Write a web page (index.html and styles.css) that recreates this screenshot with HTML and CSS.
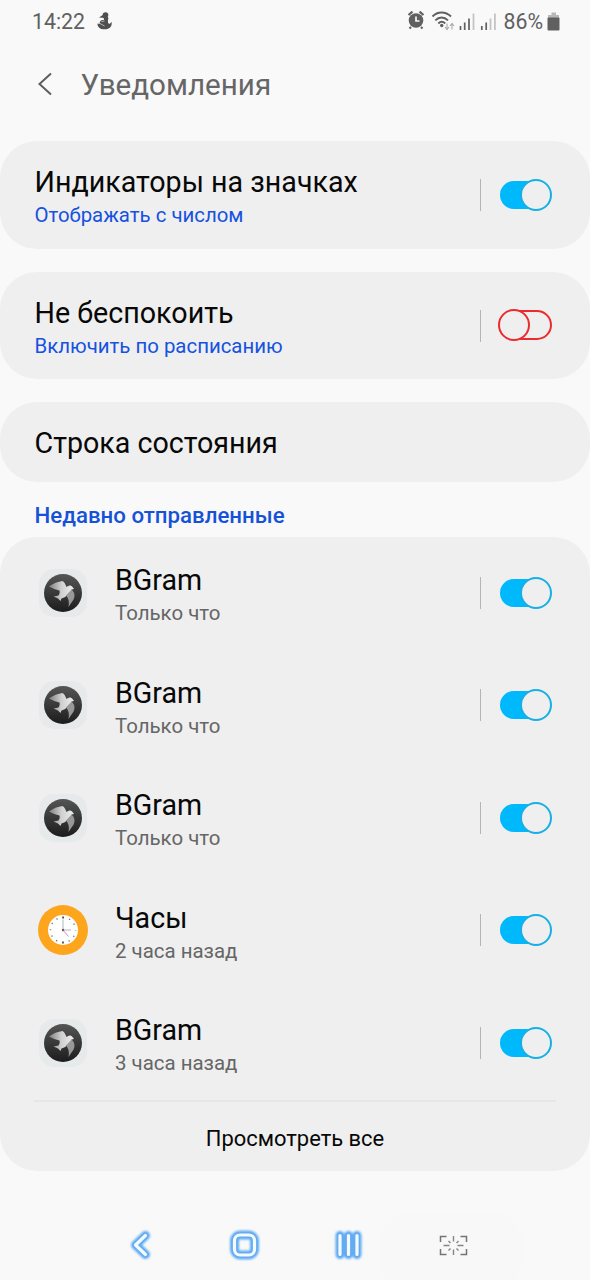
FILE: index.html
```html
<!DOCTYPE html>
<html lang="ru">
<head>
<meta charset="utf-8">
<title>Уведомления</title>
<link rel="stylesheet" href="styles.css">
</head>
<body>
<svg class="defs" width="0" height="0" aria-hidden="true">
  <defs>
    <linearGradient id="disc" x1="0" y1="0" x2="0" y2="1"><stop offset="0" stop-color="#555"/><stop offset="1" stop-color="#1c1c1c"/></linearGradient>
    <linearGradient id="wing" x1="0" y1="0" x2="1" y2="0"><stop offset="0" stop-color="#808080"/><stop offset=".5" stop-color="#d0d0d0"/><stop offset="1" stop-color="#eee"/></linearGradient>
    <symbol id="bgram" viewBox="0 0 50 50">
      <rect x="1" y="1" width="48" height="48" rx="15" fill="#e6eaea"/>
      <circle cx="25" cy="25" r="19" fill="url(#disc)"/>
      <path d="M11 18.500C15 15.500 20 13.500 24.500 13C26.500 14 27.500 16.500 28.500 19C30.500 17 33 17 34.500 19L36 21L33.500 21.500C33 24 31 26 29 27C27.500 29.500 25 30 23.500 30.500L22.500 33L20 30.500L15.500 28.500L20.500 27.500C21.500 26 22 24.500 21.500 22.500C18 21.500 14.500 20.500 11 18.500Z" fill="url(#wing)"/>
      <path d="M33.500 21.500C38 25 37 31 33.500 34.500L30.500 39C31.500 34 30.500 30 28 27.500Z" fill="#989898"/>
    </symbol>
  </defs>
</svg>
<div class="screen">
  <header class="status">
    <span class="time">14:22</span>
    <svg class="snake" width="16" height="18" viewBox="0 0 16 18"><circle cx="8.500" cy="3" r="2.800"/><path d="M8 1.500L2 5.500L8 6Z"/><path d="M6.500 5H11C12 7 10.500 8 11 10.500C11.700 12.300 13 12.200 14.500 9.700C15.500 14 13 17.300 7.500 17.300C3 17.300.3 15 .5 11.500L3 12C2 9.500 4 7.500 7 8Z"/><path d="M3 11.500l4.500 2.500M4.500 9.500l3-.5" stroke="#f9f9f9" stroke-width=".6"/></svg>
    <div class="indicators">
      <svg width="154" height="24" viewBox="0 0 154 24">
        <g fill="none" stroke="#606060">
          <path d="M1.500 6L5.500 2.700M12.500 2.700L16.500 6M4 18L2.500 19.500M14 18L15.500 19.500" stroke-width="2.200"/>
          <circle cx="9" cy="11.500" r="7.300" fill="#606060" stroke="none"/>
          <path d="M9 7.500V12H12.500" stroke="#f9f9f9" stroke-width="1.700"/>
          <path d="M25.500 7.500C30.500 2.200 38.500 2.200 44 7.500M28.300 11.300C32 7.500 37.200 7.500 41 11.300M31.300 14.500C33.500 12.300 36 12.300 38.200 14.500" stroke-width="1.900"/>
        </g>
        <circle cx="34.700" cy="16.500" r="1.700" fill="#606060"/>
        <path d="M40 14.500V20M38 18L40 20.500L42 18M45 20.500V15M43 17L45 14.500L47 17" fill="none" stroke="#aaa" stroke-width="1.100"/>
        <path d="M53.500 17V21M57.700 13.500V21M62 9.500V21" stroke="#606060" stroke-width="1.700"/>
        <path d="M66.500 4.500V21" stroke="#c4c4c4" stroke-width="1.800"/>
        <path d="M74.800 17V21M79.200 13.500V21" stroke="#606060" stroke-width="1.700"/>
        <path d="M83.500 9.500V21M87.900 4.500V21" stroke="#c4c4c4" stroke-width="1.800"/>
        <text class="percent" x="96.500" y="20">86%</text>
        <path d="M144.500 3.500h4.500v2.500h3v3.500h-11V6h3.500Z" fill="#b8b8b8"/><rect x="140.500" y="8.500" width="12" height="13" rx="1" fill="#606060"/>
      </svg>
    </div>
  </header>
  <div class="appbar">
    <svg width="16" height="24" viewBox="0 0 16 24"><path d="M14 1.500L2.500 12L14 22.500" fill="none" stroke="#5e5e5e" stroke-width="2"/></svg>
    <h1>Уведомления</h1>
  </div>
  <main>
    <section class="card setting">
      <div class="label"><div class="title">Индикаторы на значках</div><div class="sub link">Отображать с числом</div></div>
      <div class="control"><span class="toggle"></span></div>
    </section>
    <section class="card setting">
      <div class="label"><div class="title">Не беспокоить</div><div class="sub link">Включить по расписанию</div></div>
      <div class="control"><span class="toggle off"></span></div>
    </section>
    <section class="card single"><div class="title">Строка состояния</div></section>
    <h2>Недавно отправленные</h2>
    <section class="card list">
      <div class="row"><svg class="icon"><use href="#bgram"/></svg><div class="label"><div class="title">BGram</div><div class="sub">Только что</div></div><div class="control"><span class="toggle"></span></div></div>
      <div class="row"><svg class="icon"><use href="#bgram"/></svg><div class="label"><div class="title">BGram</div><div class="sub">Только что</div></div><div class="control"><span class="toggle"></span></div></div>
      <div class="row"><svg class="icon"><use href="#bgram"/></svg><div class="label"><div class="title">BGram</div><div class="sub">Только что</div></div><div class="control"><span class="toggle"></span></div></div>
      <div class="row">
        <svg class="icon" viewBox="0 0 50 50"><circle cx="25" cy="25" r="25" fill="#fda51c"/><circle cx="25" cy="25" r="15" fill="#fff"/><circle cx="25" cy="25" r="12.500" fill="none" stroke="#77716c" stroke-width="1.400" stroke-dasharray="1.200 5.345" stroke-dashoffset=".6"/><path d="M25 11.500v2M25 36.500v2" stroke="#333" stroke-width="1.300"/><path d="M25 14.500V25H33" fill="none" stroke="#b4b4c0" stroke-width="1"/><path d="M25 25L30.500 31.500" stroke="#d88ac8" stroke-width="1"/><circle cx="25" cy="25" r="1.200" fill="#755"/></svg>
        <div class="label"><div class="title">Часы</div><div class="sub">2 часа назад</div></div><div class="control"><span class="toggle"></span></div></div>
      <div class="row"><svg class="icon"><use href="#bgram"/></svg><div class="label"><div class="title">BGram</div><div class="sub">3 часа назад</div></div><div class="control"><span class="toggle"></span></div></div>
      <div class="more">Просмотреть все</div>
    </section>
  </main>
  <nav>
    <svg width="590" height="80" viewBox="0 0 590 80">
      <defs><filter id="glow" x="-30%" y="-30%" width="160%" height="160%"><feGaussianBlur stdDeviation="1.200"/></filter>
      <g id="keys" fill="none" stroke-linecap="round" stroke-linejoin="round"><path d="M145.500 35.500L135.500 45L145.500 54.500"/><rect x="234.500" y="35" width="20" height="20" rx="5.500"/><path d="M340 35.500V54.500M348.500 35.500V54.500M357 35.500V54.500"/></g></defs>
      <rect x="379" y="12" width="144" height="80" rx="34" fill="#f8f8f8"/>
      <use href="#keys" stroke="#5fadf5" stroke-width="9" filter="url(#glow)"/>
      <use href="#keys" stroke="#67aaf0" stroke-width="6"/>
      <use href="#keys" stroke="#f2fcff" stroke-width="3.200"/>
      <path d="M440.500 42v-5.500h6M460.500 36.500h6V42M466.500 49v5.500h-6M446.500 54.500h-6V49" fill="none" stroke="#747474" stroke-width="1.500"/>
      <path d="M453.500 36v5.500M453.500 49.500V55M443.500 45.500h6M457.500 45.500h6M448.500 41l2 2M458.500 41l-2 2M448.500 50.500l2-2M458.500 50.500l-2-2" fill="none" stroke="#858585" stroke-width="1.400"/>
    </svg>
  </nav>
</div>
</body>
</html>
```
FILE: styles.css
```css
*, *::before, *::after { box-sizing: border-box; }
body { margin: 0; background: #f9f9f9; font-family: Roboto, "Noto Sans", sans-serif; color: #080808; }
.defs { position: absolute; }
.screen { width: 590px; height: 1280px; display: flex; flex-direction: column; overflow: hidden; }
.status { height: 44px; padding: 0 29px 0 32px; display: flex; align-items: center; color: #606060; }
.time { font-size: 21.3px; line-height: 26px; }
.snake { margin-left: 12px; margin-top: -3px; fill: #505050; }
.indicators { margin-left: auto; height: 24px; margin-top: -3px; }
.indicators svg { display: block; }
.percent { font-size: 21.3px; fill: #606060; }
.appbar { height: 97px; padding: 28px 0 0 37px; display: flex; align-items: flex-start; }
.appbar h1 { margin: -5px 0 0 27.500px; font-size: 29.6px; line-height: 36px; font-weight: 400; color: #666; }
.card { background: #efefef; border-radius: 37px; }
.setting { height: 107.500px; margin-bottom: 23px; padding: 24px 38px 0 34.500px; display: flex; }
.label { flex: 1; }
.title { font-size: 28.650px; line-height: 35px; }
.sub { margin-top: 3px; font-size: 20.450px; line-height: 25px; color: #666; }
.link { color: #1552e0; font-size: 20.400px; }
.control { height: 32px; margin-top: 14px; border-left: 1px solid #b4b4b4; padding-left: 17px; }
.toggle { display: block; position: relative; width: 54px; height: 32px; }
.toggle::before { content: ""; position: absolute; left: 2px; top: 2px; width: 48px; height: 28px; border-radius: 14px; background: #00b9fc; }
.toggle::after { content: ""; position: absolute; right: 0; top: 0; width: 32px; height: 32px; border: 2px solid #16b0e6; border-radius: 50%; background: #efefef; }
.off { margin-top: -.500px; }
.off::before { left: 5px; top: 1px; width: 49px; height: 30px; border-radius: 15px; border: 2px solid #ed2a2d; background: none; }
.off::after { right: auto; left: 0; border: 2px solid #ed2a2d; }
.single { height: 80px; padding: 23.600px 34.500px 0; }
h2 { height: 55px; margin: 0; padding: 20px 34.500px 0; font-size: 22.250px; line-height: 27px; font-weight: 500; color: #1552d8; }
.list { height: 634px; }
.row { height: 112.500px; padding: 26px 38px 0; display: flex; }
.row .control { margin-top: 13.500px; }
.icon { width: 50px; height: 50px; margin: 4.500px 27px 0 0; }
.more { margin: 0 34px; border-top: 2px solid #e6e6e6; padding-top: 24px; text-align: center; font-size: 21.950px; line-height: 26px; }
nav { height: 80px; margin-top: auto; }
nav svg { display: block; }
```
